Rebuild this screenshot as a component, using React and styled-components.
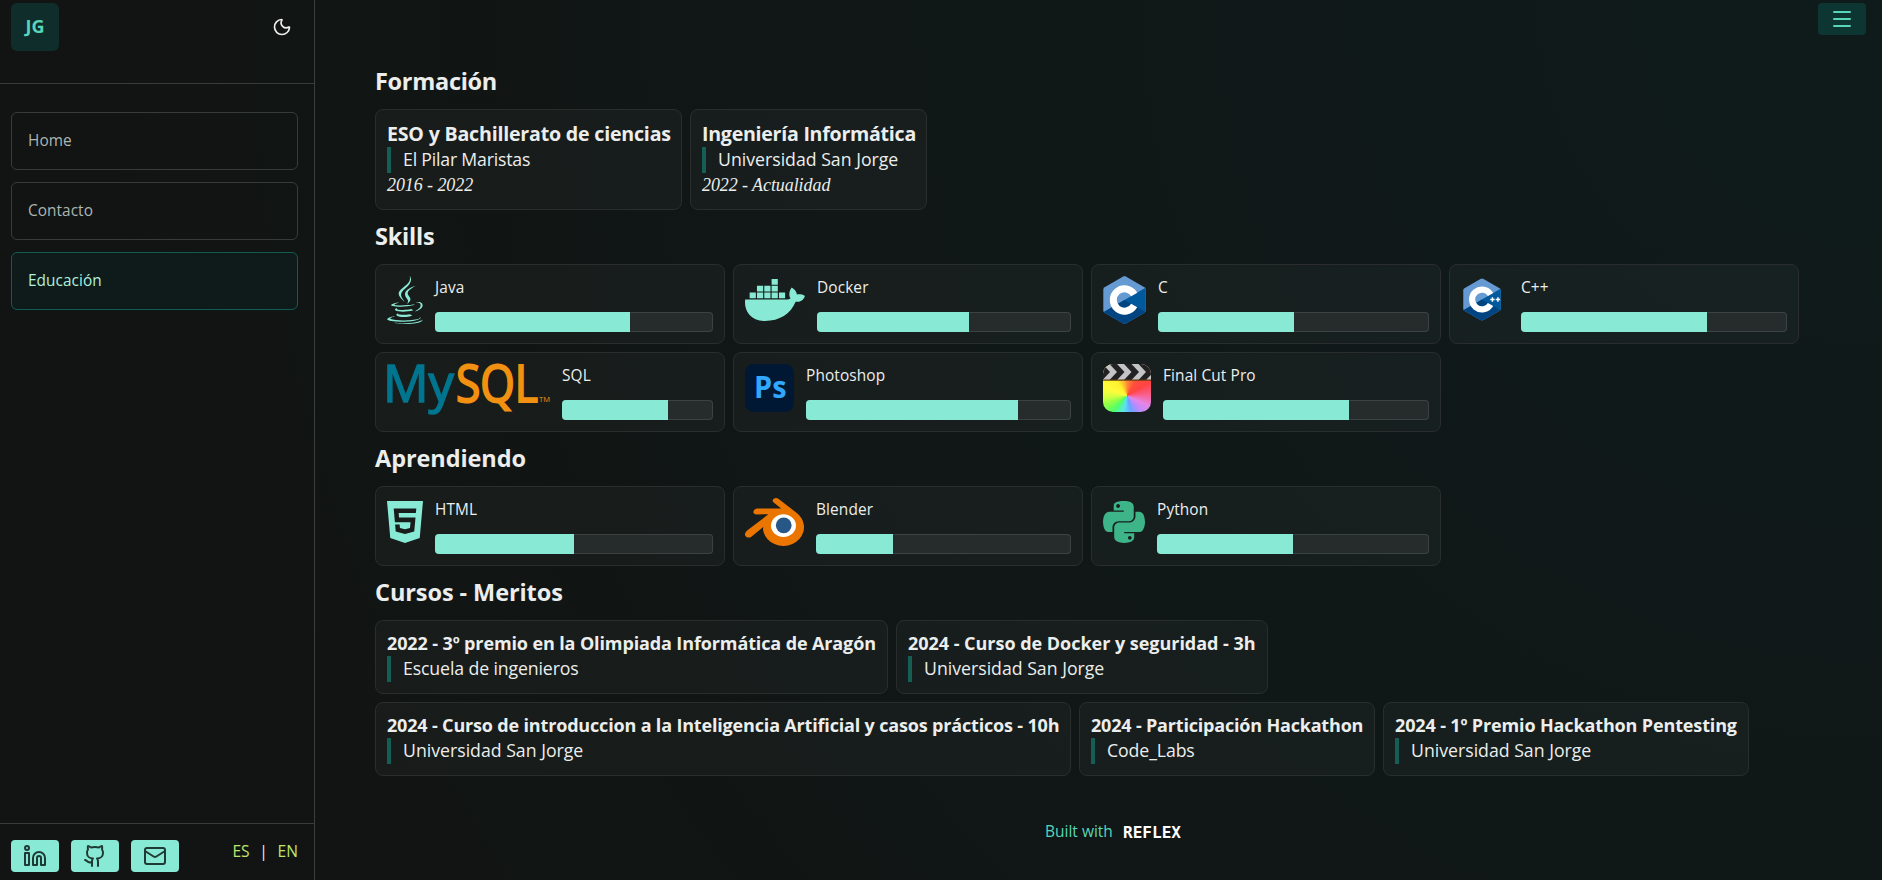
import React from "react";
import styled, { createGlobalStyle } from "styled-components";
import { Linkedin, Github, Mail, Menu, Moon } from "lucide-react";
import { FaJava, FaDocker, FaHtml5, FaPython } from "react-icons/fa";

const GlobalStyle = createGlobalStyle`
  *, *::before, *::after { box-sizing: border-box; }
  body {
    margin: 0;
    background: #111413;
    color: #eceeed;
    font-family: "Open Sans", "Noto Sans", sans-serif;
    overflow: hidden;
  }
  h2, h3, p, blockquote { margin: 0; }
  svg { display: block; flex: none; overflow: visible; }
`;

const Page = styled.div`
  display: flex;
  height: 880px;
  background: radial-gradient(circle at top right, #0f1b1b, #101716 50%, #111413 85%);
`;

const Sidebar = styled.aside`
  width: 315px;
  flex: none;
  display: flex;
  flex-direction: column;
  border-right: 1px solid #3a3f3d;
`;

const SidebarTop = styled.header`
  height: 84px;
  padding: 3px 22px 0 11px;
  display: flex;
  justify-content: space-between;
  align-items: flex-start;
  border-bottom: 1px solid #373c3a;
`;

const Avatar = styled.div`
  width: 48px;
  height: 48px;
  border-radius: 6px;
  background: #0f2d2b;
  color: #58d5ba;
  font-size: 18px;
  font-weight: 700;
  line-height: 47px;
  text-align: center;
`;

const ThemeToggle = styled.button`
  height: 48px;
  padding: 0;
  border: 0;
  background: none;
  color: #eceeed;
  display: flex;
  align-items: center;
`;

const Nav = styled.nav`
  flex: 1;
  padding: 28px 16px 0 11px;
  display: flex;
  flex-direction: column;
  gap: 12px;
`;

const NavItem = styled.a`
  height: 58px;
  padding: 0 0 2px 16px;
  display: flex;
  align-items: center;
  border-radius: 6px;
  border: 1px solid ${(p) => (p.$active ? "#115c52" : "#373c3a")};
  background: ${(p) => (p.$active ? "#0f1b1b" : "transparent")};
  color: ${(p) => (p.$active ? "#adf0dd" : "#adb5b2")};
  font-size: 15.4px;
  font-weight: ${(p) => (p.$active ? 500 : 400)};
  letter-spacing: 0.05px;
`;

const SidebarBottom = styled.footer`
  height: 57px;
  padding: 16px 16px 0 11px;
  display: flex;
  align-items: flex-start;
  justify-content: space-between;
  border-top: 1px solid #373c3a;
`;

const Socials = styled.div`
  display: flex;
  gap: 12px;
`;

const SocialButton = styled.button`
  width: 48px;
  height: 32px;
  padding: 0;
  border: 0;
  border-radius: 4px;
  background: #88ead5;
  color: #1f3a34;
  display: grid;
  place-items: center;
`;

const Languages = styled.div`
  display: flex;
  gap: 11px;
  font-size: 15.6px;
  line-height: 22px;
  color: #bde56c;
`;

const Divider = styled.span`
  width: 6px;
  display: flex;
  justify-content: center;
  color: #eceeed;
`;

const Main = styled.main`
  position: relative;
  flex: 1;
  padding: 55px 0 0 60px;
`;

const MenuButton = styled.button`
  position: absolute;
  top: 3px;
  right: 16px;
  width: 48px;
  height: 32px;
  padding: 0;
  border: 0;
  border-radius: 4px;
  background: #0d3532;
  color: #58d5ba;
  display: grid;
  place-items: center;
`;

const Heading = styled.h2`
  padding: 11px 0 13px;
  font-size: 23.5px;
  line-height: 30px;
  font-weight: 700;
  letter-spacing: ${(p) => p.$track || -0.08}px;
`;

const Wrap = styled.div`
  display: flex;
  flex-wrap: wrap;
  gap: 8px;
  width: 1440px;
`;

const Panel = styled.section`
  border: 1px solid #292e2d;
  border-radius: 8px;
  background: rgba(255, 255, 255, 0.032);
  padding: 11px;
`;

const TextCard = styled(Panel)`
  width: ${(p) => p.$w}px;
  height: ${(p) => (p.$tall ? 101 : 74)}px;
  white-space: nowrap;
`;

const CardTitle = styled.h3`
  font-weight: 700;
  font-size: ${(p) => (p.$large ? 19.6 : 18)}px;
  line-height: ${(p) => (p.$large ? 25 : 23)}px;
  height: ${(p) => (p.$large ? 26 : 24)}px;
  letter-spacing: ${(p) => p.$track}px;
`;

const Quote = styled.blockquote`
  height: 26px;
  padding-left: 12px;
  border-left: 4px solid #145e56;
  font-size: 17.7px;
  line-height: 25px;
  letter-spacing: ${(p) => p.$track || 0}px;
`;

const Dates = styled.em`
  display: block;
  font-family: "Liberation Serif", serif;
  font-size: 18px;
  line-height: 25px;
  letter-spacing: -0.08px;
`;

const SkillGrid = styled.div`
  display: grid;
  grid-template-columns: repeat(4, 350px);
  gap: 8px;
`;

const SkillCard = styled(Panel)`
  height: 80px;
  display: flex;
  gap: 12px;
`;

const IconSlot = styled.div`
  flex: none;
  width: ${(p) => p.$w}px;
  height: 48px;
  display: flex;
  justify-content: center;
  padding: ${(p) => (p.$inset ? "2px 6px 0 0" : 0)};
  color: ${(p) => p.$color || "#88ead5"};
`;

const DockerIcon = styled(FaDocker)`
  width: 60px;
  height: 48px;
`;

const SkillBody = styled.div`
  flex: 1;
  display: flex;
  flex-direction: column;
  gap: 12px;
`;

const SkillName = styled.p`
  font-size: 15.4px;
  line-height: 23px;
  padding-bottom: 1px;
  letter-spacing: 0.12px;
`;

const Track = styled.div`
  height: 20px;
  border-radius: 4px;
  overflow: hidden;
  background: #262c2c;
  box-shadow: inset 0 0 0 1px #3c4241;
`;

const Fill = styled.div`
  height: 100%;
  background: #88ead5;
`;

const ClipTile = styled.div`
  width: 48px;
  height: 48px;
  border-radius: 10px;
  overflow: hidden;
  background: conic-gradient(
    from 0deg at 50% 66%,
    #ff8a38, #ff5038 30deg, #ff4444 60deg, #f9608f 88deg, #e586e8 115deg, #b48cff 142deg,
    #68a4ff 165deg, #5ce4f0 192deg, #50ff6a 222deg, #8dff48 245deg, #d8ff40 268deg,
    #fffb3c 290deg, #fff02c 325deg, #ffb030 350deg, #ff8a38
  );
`;

const BuiltWith = styled.div`
  margin-top: 43px;
  padding-left: 670px;
  display: flex;
  align-items: center;
  gap: 11px;
  font-size: 15.5px;
  line-height: 24px;
  color: #58d5ba;

  span {
    width: 67px;
    white-space: nowrap;
  }
`;

const HEX = "M20.2.4q1.3-.7 2.6 0l18.6 10.8q1.3.8 1.3 2.3v21q0 1.500-1.300 2.300l-18.600 10.800q-1.300.7-2.600 0L1.600 36.800Q.3 36 .3 34.500v-21q0-1.500 1.300-2.300z";

function CHexagon({ id, plus }) {
  return (
    <svg width={plus ? 38 : 43} height={plus ? 43 : 48} viewBox="0 0 43 48">
      <clipPath id={id}>
        <path d={HEX} />
      </clipPath>
      <g clipPath={`url(#${id})`}>
        <rect width="43" height="48" fill="#659ad2" />
        <path d="M0 36.500 43 11.500V37z" fill="#00599c" />
        <path d="M0 36.500 21.500 24 43 36.500V48H0z" fill="#004482" />
      </g>
      <path d="M31.200 18.400A11.200 11.200 0 1 0 31.200 29.600" fill="none" stroke="#fff" strokeWidth="7" />
      {plus && (
        <path d="M30.800 24h5M33.300 21.500v5M37 24H42M39.500 21.500v5" stroke="#fff" strokeWidth="1.700" />
      )}
    </svg>
  );
}

function MySqlLogo() {
  return (
    <svg width="162" height="48" viewBox="0 0 162 48" fontFamily="Open Sans, sans-serif">
      <text x="-5" y="37.600" fontSize="51" textLength="71" lengthAdjust="spacingAndGlyphs" fill="#00758f" stroke="#00758f" strokeWidth="1.500">My</text>
      <text x="68" y="37.600" fontSize="51" textLength="82" lengthAdjust="spacingAndGlyphs" fill="#f29111" stroke="#f29111" strokeWidth="2">SQL</text>
      <text x="151" y="37.600" fontSize="7" textLength="11" lengthAdjust="spacingAndGlyphs" fill="#f29111">TM</text>
    </svg>
  );
}

function PhotoshopLogo() {
  return (
    <svg width="49" height="48" viewBox="0 0 49 48">
      <rect width="49" height="48" rx="8.500" fill="#001834" />
      <text x="9" y="34" fontFamily="Open Sans, sans-serif" fontWeight="700" fontSize="30" textLength="32.500" lengthAdjust="spacingAndGlyphs" fill="#31a8ff">Ps</text>
    </svg>
  );
}

function FinalCutLogo() {
  return (
    <ClipTile>
      <svg width="48" height="17" viewBox="0 0 48 17">
        <rect width="48" height="16" fill="#c4c4c6" />
        {[-8, 6.5, 21, 35.5].map((x) => (
          <path key={x} d={`M${x} 0h7.500l7.500 8-7.500 8h-7.500l7.500-8z`} fill="#222" />
        ))}
        <rect y="15.500" width="48" height="1.200" fill="#5a3a10" />
      </svg>
    </ClipTile>
  );
}

function BlenderLogo() {
  return (
    <svg width="59" height="48" viewBox="0 2.250 24 19.500">
      <circle cx="15.700" cy="13.300" r="5.400" fill="#fff" />
      <circle cx="15.750" cy="13.360" r="3.200" fill="#265787" />
      <path
        fill="#ea7600"
        d="M7.350 14.831c.006.314.106.922.256 1.398a7.372 7.372 0 0 0 1.593 2.757 8.227 8.227 0 0 0 2.787 2.001 8.947 8.947 0 0 0 3.660.76 8.964 8.964 0 0 0 3.657-.772 8.285 8.285 0 0 0 2.785-2.010 7.428 7.428 0 0 0 1.592-2.762 6.964 6.964 0 0 0 .25-3.074 7.123 7.123 0 0 0-1.016-2.779 7.764 7.764 0 0 0-1.852-2.043h.002L13.566 2.550l-.02-.015c-.492-.378-1.319-.376-1.860.002-.547.382-.609 1.015-.123 1.415l-.001.001 3.126 2.543-9.530.01h-.013c-.788.001-1.545.518-1.695 1.172-.154.665.38 1.217 1.200 1.220V8.900l4.830-.01-8.620 6.617-.034.025c-.813.622-1.075 1.658-.563 2.313.52.667 1.625.668 2.447.004L7.414 14s-.069.520-.063.831zm12.090 1.741c-.97.988-2.326 1.548-3.795 1.550-1.470.004-2.827-.552-3.797-1.538a4.510 4.510 0 0 1-1.036-1.622 4.282 4.282 0 0 1 .282-3.519 4.702 4.702 0 0 1 1.153-1.371c.942-.768 2.141-1.183 3.396-1.185 1.256-.002 2.455.41 3.398 1.175.48.391.87.854 1.152 1.367a4.280 4.280 0 0 1 .522 1.706 4.236 4.236 0 0 1-.239 1.811 4.540 4.540 0 0 1-1.035 1.626"
      />
    </svg>
  );
}

const ReflexWordmark = () => (
  <svg width="58" height="13" viewBox="0 0 58 13">
    <text x="0" y="12.500" fontFamily="DejaVu Sans Mono, monospace" fontWeight="700" fontSize="16" textLength="58" lengthAdjust="spacingAndGlyphs" fill="#fff">REFLEX</text>
  </svg>
);

const studies = [
  { title: "ESO y Bachillerato de ciencias", place: "El Pilar Maristas", dates: "2016 - 2022", w: 307, track: -0.2, quoteTrack: -0.2 },
  { title: "Ingeniería Informática", place: "Universidad San Jorge", dates: "2022 - Actualidad", w: 237, track: -0.26 },
];

const skills = [
  { name: "Java", value: 70, w: 36, icon: <FaJava size={48} /> },
  { name: "Docker", value: 60, w: 60, icon: <DockerIcon /> },
  { name: "C", value: 50, w: 43, icon: <CHexagon id="c-hex" /> },
  { name: "C++", value: 70, w: 48, inset: true, icon: <CHexagon id="cpp-hex" plus /> },
  { name: "SQL", value: 70, w: 163, icon: <MySqlLogo /> },
  { name: "Photoshop", value: 80, w: 49, icon: <PhotoshopLogo /> },
  { name: "Final Cut Pro", value: 70, w: 48, icon: <FinalCutLogo /> },
];

const learning = [
  { name: "HTML", value: 50, w: 36, icon: <FaHtml5 size={48} /> },
  { name: "Blender", value: 30, w: 59, icon: <BlenderLogo /> },
  { name: "Python", value: 50, w: 42, color: "#3eb489", icon: <FaPython size={48} /> },
];

const courses = [
  { title: "2022 - 3º premio en la Olimpiada Informática de Aragón", place: "Escuela de ingenieros", w: 513, track: -0.12, quoteTrack: -0.12 },
  { title: "2024 - Curso de Docker y seguridad - 3h", place: "Universidad San Jorge", w: 372, track: -0.03 },
  { title: "2024 - Curso de introduccion a la Inteligencia Artificial y casos prácticos - 10h", place: "Universidad San Jorge", w: 696, track: -0.17 },
  { title: "2024 - Participación Hackathon", place: "Code_Labs", w: 296, track: -0.19, quoteTrack: -0.1 },
  { title: "2024 - 1º Premio Hackathon Pentesting", place: "Universidad San Jorge", w: 366, track: -0.14 },
];

function Skill({ name, value, w, color, icon, inset }) {
  return (
    <SkillCard>
      <IconSlot $w={w} $color={color} $inset={inset}>{icon}</IconSlot>
      <SkillBody>
        <SkillName>{name}</SkillName>
        <Track>
          <Fill style={{ width: `${value}%` }} />
        </Track>
      </SkillBody>
    </SkillCard>
  );
}

export default function App() {
  return (
    <>
      <GlobalStyle />
      <Page>
        <Sidebar>
          <SidebarTop>
            <Avatar>JG</Avatar>
            <ThemeToggle aria-label="Tema"><Moon size={20} /></ThemeToggle>
          </SidebarTop>
          <Nav>
            <NavItem>Home</NavItem>
            <NavItem>Contacto</NavItem>
            <NavItem $active>Educación</NavItem>
          </Nav>
          <SidebarBottom>
            <Socials>
              <SocialButton aria-label="LinkedIn"><Linkedin size={24} /></SocialButton>
              <SocialButton aria-label="GitHub"><Github size={24} /></SocialButton>
              <SocialButton aria-label="Correo"><Mail size={24} /></SocialButton>
            </Socials>
            <Languages>
              <span>ES</span>
              <Divider>|</Divider>
              <span>EN</span>
            </Languages>
          </SidebarBottom>
        </Sidebar>
        <Main>
          <MenuButton aria-label="Menú"><Menu size={24} /></MenuButton>
          <Heading $track={-0.3}>Formación</Heading>
          <Wrap>
            {studies.map((s) => (
              <TextCard key={s.title} $w={s.w} $tall>
                <CardTitle $large $track={s.track}>{s.title}</CardTitle>
                <Quote $track={s.quoteTrack}>{s.place}</Quote>
                <Dates>{s.dates}</Dates>
              </TextCard>
            ))}
          </Wrap>
          <Heading $track={-0.2}>Skills</Heading>
          <SkillGrid>{skills.map((s) => <Skill key={s.name} {...s} />)}</SkillGrid>
          <Heading>Aprendiendo</Heading>
          <SkillGrid>{learning.map((s) => <Skill key={s.name} {...s} />)}</SkillGrid>
          <Heading>Cursos - Meritos</Heading>
          <Wrap>
            {courses.map((c) => (
              <TextCard key={c.title} $w={c.w}>
                <CardTitle $track={c.track}>{c.title}</CardTitle>
                <Quote $track={c.quoteTrack}>{c.place}</Quote>
              </TextCard>
            ))}
          </Wrap>
          <BuiltWith>
            <span>Built with</span>
            <ReflexWordmark />
          </BuiltWith>
        </Main>
      </Page>
    </>
  );
}
